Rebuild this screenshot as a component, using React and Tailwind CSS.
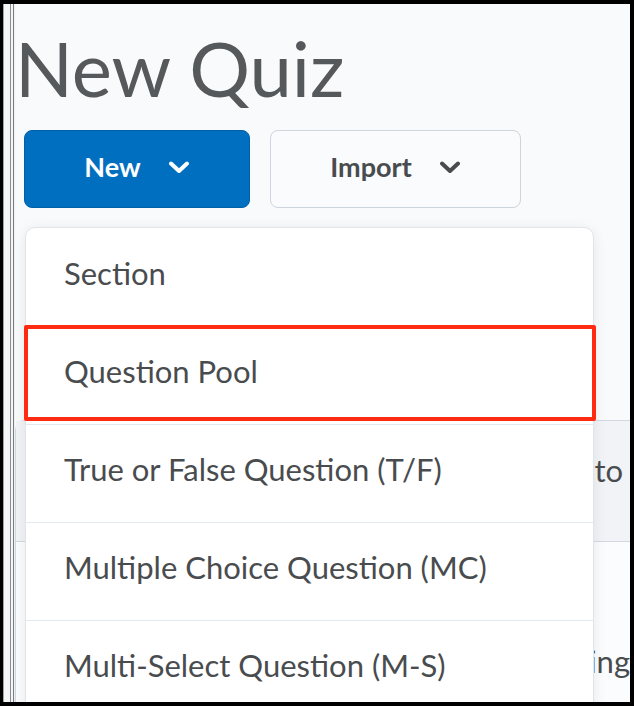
import React from 'react';

const Chevron = ({ className }) => (
  <svg viewBox="0 0 22 13" className={className} fill="none">
    <path d="M3 2.5 L11 10 L19 2.5" stroke="currentColor" strokeWidth="4" strokeLinecap="round" strokeLinejoin="round" />
  </svg>
);

const items = [
  'Section',
  'Question Pool',
  'True or False Question (T/F)',
  'Multiple Choice Question (MC)',
  'Multi-Select Question (M-S)',
];

export default function App() {
  return (
    <div
      className="w-[634px] h-[706px] bg-black pt-[4px] pl-[3px] pr-[4px] pb-[4px]"
      style={{ fontFamily: 'Lato, "Open Sans", sans-serif' }}
    >
      <div className="relative flex h-full overflow-hidden bg-[#f9fafb]">
        {/* window edge lines */}
        <div className="flex shrink-0">
          <div className="w-px bg-[#a3a3a3]" />
          <div className="w-[6px] bg-[#f4f5f6]" />
          <div className="w-px bg-[#8d8d8d]" />
          <div className="w-[2px] bg-[#f4f5f6]" />
          <div className="w-px bg-[#7c7c7c]" />
          <div className="w-px bg-[#eef0f2]" />
        </div>

        <div className="relative flex-1 flex flex-col">
          <h1 className="mt-[26px] text-[76px] leading-[76px] font-normal text-[#55595c]">
            New Quiz
          </h1>

          <div className="mt-[24px] flex gap-[20px] pl-[9px]">
            <button className="w-[226px] h-[78px] pb-[3px] rounded-[8px] bg-[#006fbf] border border-[#0060a8] flex items-center justify-center gap-[27px] text-white">
              <span className="text-[27px] font-bold">New</span>
              <Chevron className="w-[22px] h-[13px]" />
            </button>
            <button className="w-[251px] h-[78px] pb-[3px] rounded-[8px] bg-[#f9fbfd] border border-[#cdd5df] flex items-center justify-center gap-[27px] text-[#494c4e]">
              <span className="text-[27px] font-bold">Import</span>
              <Chevron className="w-[22px] h-[13px]" />
            </button>
          </div>

          {/* page content under the menu */}
          <div className="mt-[212px] flex-1 rounded-tl-[10px] border-t border-l border-[#d3d9e3] bg-[#fbfcfd]">
            <div className="h-[121px] bg-[#f1f3f6] border-b border-[#d3d9e3] flex justify-end items-start pt-[31px] pr-[7px]">
              <span className="text-[31px] leading-[36px] text-[#494c4e] whitespace-nowrap">Add to</span>
            </div>
            <div className="flex justify-end pt-[101px]">
              <span className="text-[31px] leading-[36px] text-[#494c4e] whitespace-nowrap">Scoring</span>
            </div>
          </div>

          {/* dropdown menu */}
          <div className="absolute left-[10px] top-[223px] w-[569px] h-[520px] rounded-t-[10px] bg-white border border-[#e0e5eb] shadow-[0_2px_14px_rgba(0,0,0,0.08)] overflow-hidden">
            {items.map((label, i) => (
              <div
                key={label}
                className={`h-[98px] flex items-center pl-[38px] pb-[8px] text-[31px] text-[#494c4e] ${i > 0 ? 'border-t border-[#e3e9f1]' : ''}`}
              >
                {label}
              </div>
            ))}
          </div>

          {/* highlight box */}
          <div className="absolute left-[9px] top-[321px] w-[572px] h-[96px] border-[4px] border-[#ff2a12] rounded-[2px]" />
        </div>
      </div>
    </div>
  );
}
